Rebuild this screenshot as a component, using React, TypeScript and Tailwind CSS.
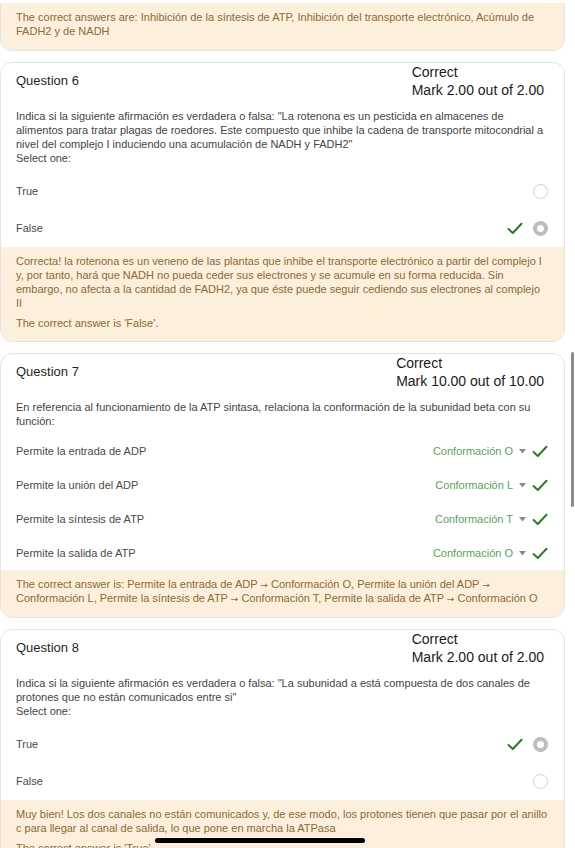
import React from "react";

type Lines = React.ReactNode[];

const font = { fontFamily: '"Liberation Sans", Arial, sans-serif' };

/* ── small drawings ── */
const Check = () => (
  <svg width="16" height="13" viewBox="0 0 16 13" className="shrink-0">
    <path d="M1.5 7 L5.8 11 L14.5 1.8" fill="none" stroke="#2a7a2a" strokeWidth="2" strokeLinecap="round" strokeLinejoin="round" />
  </svg>
);

const Radio = ({ checked }: { checked?: boolean }) =>
  checked ? (
    <span className="flex h-[15px] w-[15px] items-center justify-center rounded-full bg-[#bdbdbd]">
      <span className="h-[7px] w-[7px] rounded-full bg-white" />
    </span>
  ) : (
    <span className="h-[15px] w-[15px] rounded-full border border-[#cfcfcf] bg-white" />
  );

const Caret = () => (
  <svg width="7" height="5" viewBox="0 0 7 5" className="shrink-0">
    <path d="M0 0 H7 L3.5 4.5 Z" fill="#8a8a8a" />
  </svg>
);

const Arrow = () => <span className="font-['DejaVu_Sans'] text-[9px] leading-none">→</span>;

const MultiLine = ({ lines }: { lines: Lines }) => (
  <>
    {lines.map((l, i) => (
      <div key={i} className="h-[14px] whitespace-nowrap">
        {l}
      </div>
    ))}
  </>
);

/* ── feedback block ── */
const Feedback = ({ lines, answer, pb = "pb-[11px]" }: { lines: Lines; answer?: string; pb?: string }) => (
  <div className={`bg-[#fcefdc] px-[15px] pt-[7px] ${pb} text-[11px] leading-[14px] text-[#8a6a37]`}>
    <MultiLine lines={lines} />
    {answer && <div className="mt-[6px] whitespace-nowrap">{answer}</div>}
  </div>
);

/* ── question header ── */
const Header = ({ num, mark }: { num: number; mark: string }) => (
  <div className="flex items-center justify-between pl-[15px] pr-[20px]">
    <span className="text-[13px] text-[#1f1f1f]">Question {num}</span>
    <div className="text-[14px] leading-[18px] text-[#1a1a1a]">
      <div>Correct</div>
      <div>{mark}</div>
    </div>
  </div>
);

const Card = ({ children }: { children: React.ReactNode }) => (
  <div className="w-[565px] overflow-hidden rounded-xl border border-[#e4e4e4] bg-white">{children}</div>
);

const TrueFalse = ({ correct }: { correct: "True" | "False" }) => (
  <div className="mt-[8px]">
    {(["True", "False"] as const).map((opt) => (
      <div key={opt} className="flex h-[37px] items-center justify-between pl-[15px] pr-[16px] text-[11px] text-[#4a4a4a]">
        <span>{opt}</span>
        <div className="flex items-center gap-[10px]">
          {opt === correct && <Check />}
          <Radio checked={opt === correct} />
        </div>
      </div>
    ))}
  </div>
);

const matches = [
  { left: "Permite la entrada de ADP", right: "Conformación O" },
  { left: "Permite la unión del ADP", right: "Conformación L" },
  { left: "Permite la síntesis de ATP", right: "Conformación T" },
  { left: "Permite la salida de ATP", right: "Conformación O" },
];

export default function App() {
  return (
    <div style={font} className="relative h-[848px] w-[575px] overflow-hidden bg-white">
      <div className="flex flex-col gap-[11px] pt-[3px]">
        {/* tail of previous question */}
        <div className="w-[565px] overflow-hidden rounded-b-xl border-x border-b border-[#e4e4e4]">
          <Feedback
            lines={[
              "The correct answers are: Inhibición de la síntesis de ATP, Inhibición del transporte electrónico, Acúmulo de",
              "FADH2 y de NADH",
            ]}
            pb="pb-[12px]"
          />
        </div>

        {/* Question 6 */}
        <Card>
          <Header num={6} mark="Mark 2.00 out of 2.00" />
          <div className="mt-[10px] px-[15px] text-[11px] leading-[14px] text-[#444]">
            <MultiLine
              lines={[
                'Indica si la siguiente afirmación es verdadera o falsa: "La rotenona es un pesticida en almacenes de',
                "alimentos para tratar plagas de roedores. Este compuesto que inhibe la cadena de transporte mitocondrial a",
                'nivel del complejo I induciendo una acumulación de NADH y FADH2"',
                "Select one:",
              ]}
            />
          </div>
          <TrueFalse correct="False" />
          <Feedback
            lines={[
              "Correcta! la rotenona es un veneno de las plantas que inhibe el transporte electrónico a partir del complejo I",
              "y, por tanto, hará que NADH no pueda ceder sus electrones y se acumule en su forma reducida. Sin",
              "embargo, no afecta a la cantidad de FADH2, ya que éste puede seguir cediendo sus electrones al complejo",
              "II",
            ]}
            answer="The correct answer is 'False'."
          />
        </Card>

        {/* Question 7 */}
        <Card>
          <Header num={7} mark="Mark 10.00 out of 10.00" />
          <div className="mt-[10px] px-[15px] text-[11px] leading-[14px] text-[#444]">
            <MultiLine
              lines={[
                "En referencia al funcionamiento de la ATP sintasa, relaciona la conformación de la subunidad beta con su",
                "función:",
              ]}
            />
          </div>
          <div className="mt-[6px]">
            {matches.map((m) => (
              <div key={m.left} className="flex h-[34px] items-center justify-between pl-[15px] pr-[16px] text-[11px]">
                <span className="text-[#4a4a4a]">{m.left}</span>
                <div className="flex items-center">
                  <span className="text-[#5b9f5b]">{m.right}</span>
                  <span className="ml-[6px] mr-[6px]">
                    <Caret />
                  </span>
                  <Check />
                </div>
              </div>
            ))}
          </div>
          <Feedback
            lines={[
              <>
                The correct answer is: Permite la entrada de ADP <Arrow /> Conformación O, Permite la unión del ADP <Arrow />
              </>,
              <>
                Conformación L, Permite la síntesis de ATP <Arrow /> Conformación T, Permite la salida de ATP <Arrow /> Conformación O
              </>,
            ]}
            pb="pb-[12px]"
          />
        </Card>

        {/* Question 8 */}
        <Card>
          <Header num={8} mark="Mark 2.00 out of 2.00" />
          <div className="mt-[10px] px-[15px] text-[11px] leading-[14px] text-[#444]">
            <MultiLine
              lines={[
                'Indica si la siguiente afirmación es verdadera o falsa: "La subunidad a está compuesta de dos canales de',
                'protones que no están comunicados entre si"',
                "Select one:",
              ]}
            />
          </div>
          <TrueFalse correct="True" />
          <Feedback
            lines={[
              "Muy bien! Los dos canales no están comunicados y, de ese modo, los protones tienen que pasar por el anillo",
              "c para llegar al canal de salida, lo que pone en marcha la ATPasa",
            ]}
            answer="The correct answer is 'True'."
          />
        </Card>
      </div>

      {/* scroll indicator */}
      <div className="absolute left-[571px] top-[352px] h-[155px] w-[3px] rounded-full bg-[#8c8c8c]" />
      {/* home indicator */}
      <div className="absolute left-[155px] top-[838px] h-[5px] w-[210px] rounded-full bg-black" />
    </div>
  );
}
